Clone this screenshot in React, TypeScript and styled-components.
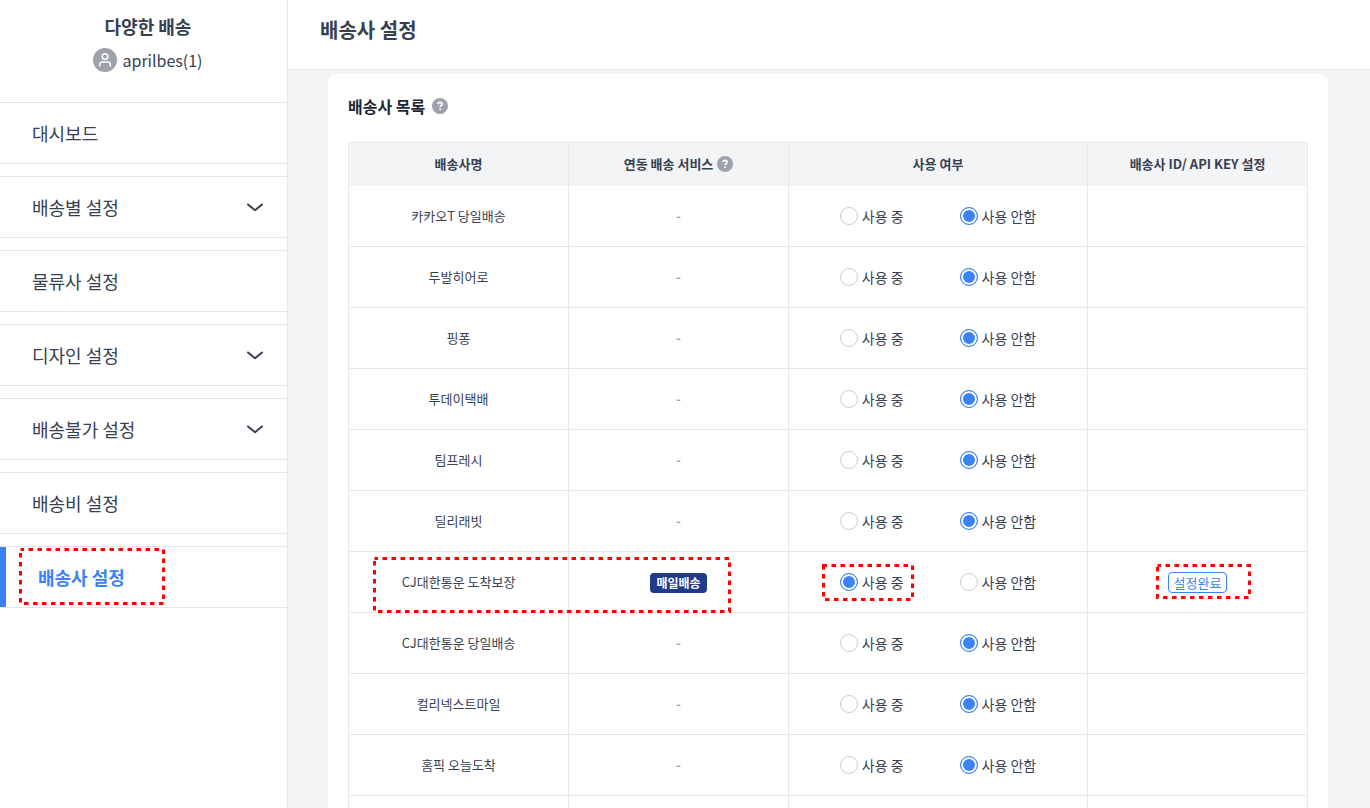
import React from "react";
import styled, { createGlobalStyle, css } from "styled-components";

const GlobalStyle = createGlobalStyle`
  * { box-sizing: border-box; }
  body {
    margin: 0;
    background: #f3f4f6;
    color: #374151;
    font-family: "Noto Sans CJK KR", "Noto Sans", sans-serif;
    font-size: 13px;
    line-height: 20px;
  }
`;

const Page = styled.div`
  display: flex;
  height: 100vh;
  overflow: hidden;
`;

const Sidebar = styled.aside`
  flex: 0 0 288px;
  background: #fff;
  border-right: 1px solid #e5e7eb;
`;

const Profile = styled.div`
  display: flex;
  flex-direction: column;
  align-items: center;
  gap: 7px;
  height: 102px;
  padding: 13px 0 0 9px;
`;

const ShopName = styled.strong`
  font-size: 18px;
  line-height: 26px;
  font-weight: 700;
`;

const Account = styled.div`
  display: flex;
  align-items: center;
  gap: 5px;
  font-size: 16px;
  line-height: 28px;
`;

const Menu = styled.nav`
  display: flex;
  flex-direction: column;
  gap: 12px;
`;

const MenuItem = styled.a<{ $active?: boolean }>`
  position: relative;
  display: flex;
  align-items: center;
  justify-content: space-between;
  height: 62px;
  padding: 0 22px 0 32px;
  border: solid #e5e7eb;
  border-width: 1px 0;
  color: #374151;
  font-size: 18px;
  line-height: 28px;
  text-decoration: none;
  ${(p) =>
    p.$active &&
    css`
      color: #3b82f6;
      font-weight: 700;
      padding-left: 38px;
      box-shadow: inset 6px 0 0 #3b82f6;
    `}
`;

const Main = styled.main`
  flex: 1;
  min-width: 0;
`;

const TopBar = styled.header`
  display: flex;
  align-items: flex-start;
  height: 70px;
  padding: 16px 32px;
  background: #fff;
  border-bottom: 1px solid #e5e7eb;
`;

const PageTitle = styled.h1`
  margin: 0;
  font-size: 20px;
  line-height: 28px;
  font-weight: 700;
`;

const Card = styled.section`
  margin: 4px 42px 0 40px;
  padding: 20px;
  background: #fff;
  border-radius: 8px;
`;

const CardTitle = styled.h2`
  display: flex;
  align-items: center;
  gap: 7px;
  margin: 0 0 24px;
  color: #1f2937;
  font-size: 16px;
  line-height: 24px;
  font-weight: 700;
`;

const HelpButton = styled.button`
  display: inline-flex;
  padding: 0;
  border: 0;
  background: none;
  vertical-align: middle;
`;

const Table = styled.table`
  width: 100%;
  table-layout: fixed;
  border-collapse: collapse;
`;

const Col = styled.col<{ $wide?: boolean }>`
  width: ${(p) => (p.$wide ? "auto" : "220px")};
`;

const HeadCell = styled.th`
  height: 43px;
  padding: 0;
  background: #f3f4f6;
  border: 1px solid #e5e7eb;
  border-bottom: 0;
  font-weight: 700;
`;

const HeadLabel = styled.span`
  display: flex;
  align-items: center;
  justify-content: center;
  gap: 4px;
`;

const Cell = styled.td`
  position: relative;
  height: 61px;
  padding: 0;
  border: solid #e5e7eb;
  border-width: 0 1px 1px;
  text-align: center;
`;

const Empty = styled.span`
  color: #9ca3af;
  font-weight: 700;
`;

const Badge = styled.span`
  display: inline-block;
  padding: 0 6px;
  border-radius: 4px;
  background: #1e3a8a;
  color: #fff;
  font-size: 12px;
  font-weight: 700;
  vertical-align: middle;
`;

const StatusButton = styled.button`
  padding: 0 5px;
  border: 1px solid #3b82f6;
  border-radius: 4px;
  background: #fff;
  color: #3b82f6;
  font: inherit;
  line-height: 19px;
  vertical-align: middle;
`;

const Choices = styled.div`
  display: flex;
  justify-content: center;
  gap: 56px;
`;

const Choice = styled.label`
  display: flex;
  align-items: center;
  gap: 4px;
  font-size: 14px;
`;

const Radio = styled.input`
  appearance: none;
  width: 18px;
  height: 18px;
  margin: 0;
  border: 1px solid #ccc;
  border-radius: 50%;
  background: #fff;
  &:checked {
    border-color: #3b82f6;
    background: #3b82f6;
    box-shadow: inset 0 0 0 2px #fff;
  }
`;

const MarkBox = styled.svg<{ $left: number; $top: number; $w: number; $h: number }>`
  position: absolute;
  z-index: 1;
  left: ${(p) => p.$left}px;
  top: ${(p) => p.$top}px;
  width: ${(p) => p.$w}px;
  height: ${(p) => p.$h}px;
  pointer-events: none;
`;

type MarkProps = { left: number; top: number; w: number; h: number };

const Mark = ({ left, top, w, h }: MarkProps) => (
  <MarkBox $left={left} $top={top} $w={w} $h={h} aria-hidden="true">
    <rect
      x="1.5"
      y="1.5"
      width={w - 3}
      height={h - 3}
      fill="none"
      stroke="#f00"
      strokeWidth="3"
      strokeDasharray="4.5 4.5"
      strokeDashoffset="1"
    />
  </MarkBox>
);

const Help = () => (
  <HelpButton type="button" aria-label="도움말">
    <svg width="16" height="16" viewBox="0 0 16 16" fill="none">
      <circle cx="8" cy="8" r="8" fill="#9ca3af" />
      <path
        d="M5.9 6.3C5.9 5 6.8 4.4 8 4.4s2.1.7 2.1 1.8c0 1.4-2 1.5-2 2.9"
        stroke="#fff"
        strokeWidth="1.6"
      />
      <circle cx="8.1" cy="11.2" r="1" fill="#fff" />
    </svg>
  </HelpButton>
);

const Avatar = () => (
  <svg width="24" height="24" viewBox="0 0 24 24" fill="none" aria-hidden="true">
    <circle cx="12" cy="12" r="12" fill="#9ca3af" />
    <circle cx="12" cy="8.5" r="2.8" stroke="#fff" strokeWidth="1.5" />
    <path d="M6.7 18.4v-1.6c0-1.6 1-2.8 2.6-2.8h5.4c1.6 0 2.6 1.2 2.6 2.8v1.6" stroke="#fff" strokeWidth="1.5" />
  </svg>
);

const Chevron = () => (
  <svg width="20" height="12" viewBox="0 0 20 12" fill="none" aria-hidden="true">
    <path d="M3 3.5 10 9.3l7-5.8" stroke="#374151" strokeWidth="2" strokeLinecap="round" strokeLinejoin="round" />
  </svg>
);

const menu = [
  { label: "대시보드" },
  { label: "배송별 설정", open: true },
  { label: "물류사 설정" },
  { label: "디자인 설정", open: true },
  { label: "배송불가 설정", open: true },
  { label: "배송비 설정" },
  { label: "배송사 설정", active: true },
];

const carriers = [
  "카카오T 당일배송",
  "두발히어로",
  "핑퐁",
  "투데이택배",
  "팀프레시",
  "딜리래빗",
  "CJ대한통운 도착보장",
  "CJ대한통운 당일배송",
  "컬리넥스트마일",
  "홈픽 오늘도착",
];

const linked = "CJ대한통운 도착보장";

const CarrierRow = ({ name }: { name: string }) => {
  const on = name === linked;
  return (
    <tr>
      <Cell>
        {name}
        {on && <Mark left={24} top={5} w={358} h={56} />}
      </Cell>
      <Cell>{on ? <Badge>매일배송</Badge> : <Empty>-</Empty>}</Cell>
      <Cell>
        <Choices>
          <Choice>
            <Radio type="radio" name={name} defaultChecked={on} />
            사용 중
          </Choice>
          <Choice>
            <Radio type="radio" name={name} defaultChecked={!on} />
            사용 안함
          </Choice>
        </Choices>
        {on && <Mark left={33} top={12} w={92} h={37} />}
      </Cell>
      <Cell>
        {on && <StatusButton type="button">설정완료</StatusButton>}
        {on && <Mark left={68} top={12} w={95} h={35} />}
      </Cell>
    </tr>
  );
};

export default function App() {
  return (
    <Page>
      <GlobalStyle />
      <Sidebar>
        <Profile>
          <ShopName>다양한 배송</ShopName>
          <Account>
            <Avatar />
            aprilbes(1)
          </Account>
        </Profile>
        <Menu>
          {menu.map((m) => (
            <MenuItem key={m.label} href="#" $active={m.active}>
              {m.label}
              {m.open && <Chevron />}
              {m.active && <Mark left={19} top={1} w={146} h={57} />}
            </MenuItem>
          ))}
        </Menu>
      </Sidebar>
      <Main>
        <TopBar>
          <PageTitle>배송사 설정</PageTitle>
        </TopBar>
        <Card>
          <CardTitle>
            배송사 목록 <Help />
          </CardTitle>
          <Table>
            <colgroup>
              <Col />
              <Col />
              <Col $wide />
              <Col />
            </colgroup>
            <thead>
              <tr>
                <HeadCell>배송사명</HeadCell>
                <HeadCell>
                  <HeadLabel>
                    연동 배송 서비스 <Help />
                  </HeadLabel>
                </HeadCell>
                <HeadCell>사용 여부</HeadCell>
                <HeadCell>배송사 ID/ API KEY 설정</HeadCell>
              </tr>
            </thead>
            <tbody>
              {carriers.map((name) => (
                <CarrierRow key={name} name={name} />
              ))}
              <tr>
                <Cell />
                <Cell />
                <Cell />
                <Cell />
              </tr>
            </tbody>
          </Table>
        </Card>
      </Main>
    </Page>
  );
}
